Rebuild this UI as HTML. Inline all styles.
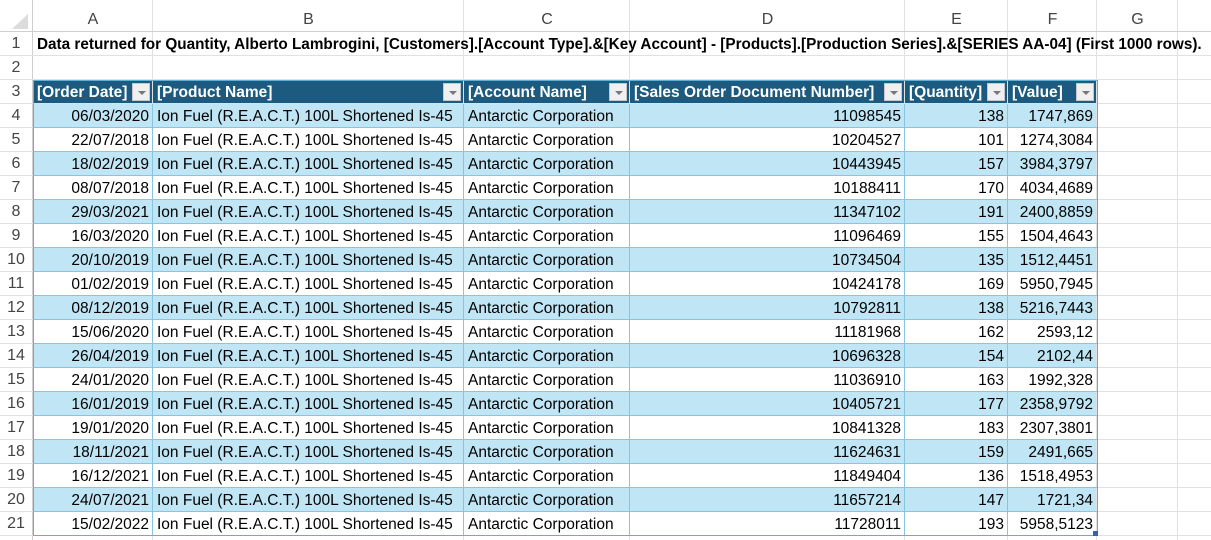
<!DOCTYPE html>
<html><head><meta charset="utf-8"><style>
*{margin:0;padding:0;box-sizing:border-box}
body{width:1211px;height:540px;overflow:hidden;background:#fff;font-family:"Liberation Sans",sans-serif;position:relative}
.vl{position:absolute;top:0;width:1px;height:540px;background:#e1e1e1}
.hl{position:absolute;left:0;height:1px;width:1211px;background:#e1e1e1}
.ch{position:absolute;top:0;height:31px;line-height:40px;text-align:center;font-size:16px;color:#444}
.rh{position:absolute;left:0;width:32px;text-align:center;font-size:16px;color:#444;height:24px;line-height:24px}
.c{position:absolute;height:24px;line-height:25px;font-size:15.5px;color:#000;white-space:nowrap;overflow:hidden;padding:0 4px}
.r{text-align:right}
.band{position:absolute;left:33px;width:1064px;height:24px}
.hd{color:#fff;font-weight:bold}
.fb{position:absolute;width:18px;height:18px;background:#f0f0f0;border:1px solid #c8c8c8}
.fb:after{content:"";position:absolute;left:5px;top:7px;border-left:4px solid transparent;border-right:4px solid transparent;border-top:4px solid #777}
</style></head><body>
<div style="position:absolute;left:0;top:0;width:1211px;height:31px;background:#fff"></div>
<div style="position:absolute;left:12px;top:14px;width:0;height:0;border-left:16px solid transparent;border-bottom:15px solid #dcdcdc"></div>
<div id="g"></div>
<script>
var cols=[33,153,464,630,905,1008,1097,1178,1260];
var names=["A","B","C","D","E","F","G","H"];
var h='';
h+='<div style="position:absolute;left:33px;top:80px;width:1064px;height:24px;background:#1c5a80"></div>';
for(var r=4;r<=21;r++){var y=104+(r-4)*24;h+='<div class="band" style="top:'+y+'px;background:'+(r%2==0?'#c0e6f5':'#fff')+'"></div>';}
h+='<div class="vl" style="left:32px;background:#cfcfcf"></div>';
for(var i=1;i<cols.length;i++){h+='<div class="vl" style="left:'+(cols[i]-1)+'px"></div>';}
h+='<div class="hl" style="top:31px;background:#cfcfcf"></div>';
for(var r=1;r<=21;r++){h+='<div class="hl" style="top:'+(31+r*24)+'px"></div>';}
for(var i=1;i<6;i++){h+='<div style="position:absolute;top:104px;left:'+(cols[i]-1)+'px;width:1px;height:432px;background:#86c6e3"></div>';}
for(var r=4;r<=21;r++){h+='<div style="position:absolute;left:33px;width:1064px;height:1px;top:'+(103+(r-4)*24+24)+'px;background:#86c6e3"></div>';}
h+='<div style="position:absolute;left:33px;top:80px;width:1065px;height:456px;border:1px solid #5fb0d8"></div>';
h+='<div style="position:absolute;left:1093px;top:531px;width:5px;height:5px;background:#3a5fb0"></div>';
for(var i=0;i<8;i++){h+='<div class="ch" style="left:'+cols[i]+'px;width:'+(cols[i+1]-cols[i])+'px">'+names[i]+'</div>';}
for(var r=1;r<=21;r++){h+='<div class="rh" style="top:'+(32+(r-1)*24)+'px">'+r+'</div>';}
h+='<div class="c" style="left:33px;top:32px;font-weight:bold;font-size:15.3px;padding-left:4px;overflow:visible">Data returned for Quantity, Alberto Lambrogini, [Customers].[Account Type].&amp;[Key Account] - [Products].[Production Series].&amp;[SERIES AA-04] (First 1000 rows).</div>';
var hd=["[Order Date]","[Product Name]","[Account Name]","[Sales Order Document Number]","[Quantity]","[Value]"];
for(var i=0;i<6;i++){h+='<div class="c hd" style="left:'+cols[i]+'px;top:80px;width:'+(cols[i+1]-cols[i])+'px">'+hd[i]+'</div>';h+='<div class="fb" style="left:'+(cols[i+1]-21)+'px;top:83px"></div>';}
var d=[["06/03/2020","11098545","138","1747,869"],["22/07/2018","10204527","101","1274,3084"],["18/02/2019","10443945","157","3984,3797"],["08/07/2018","10188411","170","4034,4689"],["29/03/2021","11347102","191","2400,8859"],["16/03/2020","11096469","155","1504,4643"],["20/10/2019","10734504","135","1512,4451"],["01/02/2019","10424178","169","5950,7945"],["08/12/2019","10792811","138","5216,7443"],["15/06/2020","11181968","162","2593,12"],["26/04/2019","10696328","154","2102,44"],["24/01/2020","11036910","163","1992,328"],["16/01/2019","10405721","177","2358,9792"],["19/01/2020","10841328","183","2307,3801"],["18/11/2021","11624631","159","2491,665"],["16/12/2021","11849404","136","1518,4953"],["24/07/2021","11657214","147","1721,34"],["15/02/2022","11728011","193","5958,5123"]];
for(var k=0;k<d.length;k++){var y=104+k*24,row=d[k];
var vals=[[row[0],1],["Ion Fuel (R.E.A.C.T.) 100L Shortened Is-45",0],["Antarctic Corporation",0],[row[1],1],[row[2],1],[row[3],1]];
for(var i=0;i<6;i++){h+='<div class="c'+(vals[i][1]?' r':'')+'" style="left:'+cols[i]+'px;top:'+y+'px;width:'+(cols[i+1]-cols[i])+'px">'+vals[i][0]+'</div>';}}
document.getElementById('g').innerHTML=h;
</script>
</body></html>
